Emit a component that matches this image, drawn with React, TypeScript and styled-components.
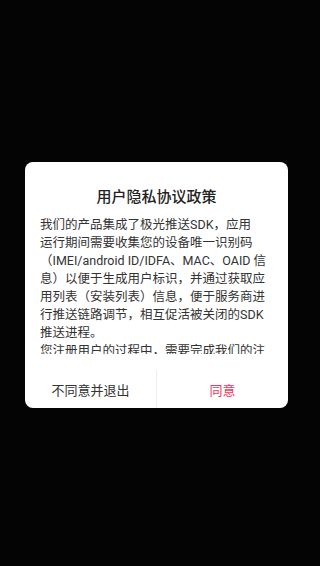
import styled, { createGlobalStyle } from 'styled-components';

const GlobalStyle = createGlobalStyle`
  html, body {
    margin: 0;
    padding: 0;
    background: #040404;
  }

  #root {
    min-height: 100vh;
  }
`;

// line breaks follow the original dialog
const introLines = [
  '我们的产品集成了极光推送SDK，应用',
  '运行期间需要收集您的设备唯一识别码',
  '（IMEI/android ID/IDFA、MAC、OAID 信',
  '息）以便于生成用户标识，并通过获取应',
  '用列表（安装列表）信息，便于服务商进',
  '行推送链路调节，相互促活被关闭的SDK',
  '推送进程。',
];

const Home = () => {
  return (
    <Backdrop>
      <GlobalStyle />
      <Dialog>
        <Title>用户隐私协议政策</Title>
        <Body>
          <Intro>
            {introLines.map((line, i) => (
              <span key={i}>
                {line}
                {i < introLines.length - 1 && <br />}
              </span>
            ))}
          </Intro>
          <p>您注册用户的过程中，需要完成我们的注册流程并在线签署以下协议：《用户协议》《隐私政策》</p>
        </Body>
        <Actions>
          <ActionButton>不同意并退出</ActionButton>
          <ActionButton $primary>同意</ActionButton>
        </Actions>
      </Dialog>
    </Backdrop>
  );
};

const Backdrop = styled.div`
  min-height: 100vh;
  box-sizing: border-box;
  padding: 4px 7px 0 0;
  display: flex;
  align-items: center;
  justify-content: center;
  font-family: Roboto, 'Noto Sans CJK SC', sans-serif;
`;

const Dialog = styled.div`
  width: 263px;
  background: #ffffff;
  border-radius: 8px;
  display: flex;
  flex-direction: column;
  overflow: hidden;
`;

const Title = styled.h2`
  margin: 0;
  padding-top: 25px;
  font-size: 15px;
  line-height: 20px;
  font-weight: 500;
  color: #222222;
  text-align: center;
`;

const Body = styled.div`
  margin: 9px 0 16px;
  padding: 0 22px 0 15px;
  height: 138px;
  overflow-y: auto;
  overflow-x: hidden;
  scrollbar-width: none;

  p {
    margin: 0;
    font-size: 12.5px;
    line-height: 18px;
    color: #333333;
  }
`;

const Intro = styled.p`
  white-space: nowrap;
`;

const Actions = styled.div`
  display: flex;
  height: 38px;
`;

const ActionButton = styled.button<{ $primary?: boolean }>`
  flex: 1;
  border: none;
  background: none;
  margin: 0;
  padding: 4px 0 0;
  font-family: inherit;
  font-size: 13px;
  line-height: 18px;
  color: ${p => (p.$primary ? '#f2385c' : '#333333')};

  & + & {
    border-left: 1px solid #eeeeee;
  }
`;

export default Home;
